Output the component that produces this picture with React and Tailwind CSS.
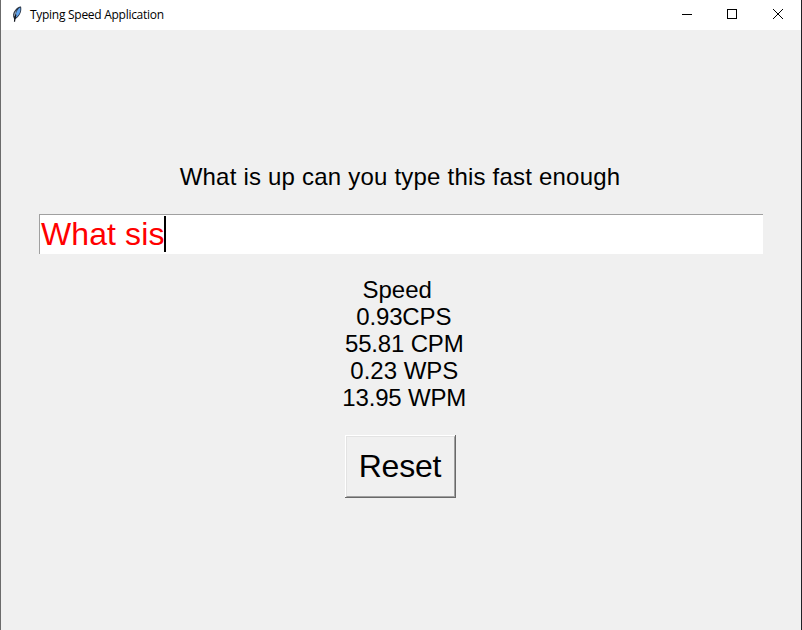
const speeds = [
  { text: "Speed ", spacing: "tracking-normal -ml-px" },
  { text: " 0.93CPS", spacing: "tracking-[-0.15px] -ml-px" },
  { text: " 55.81 CPM", spacing: "tracking-[-0.18px]" },
  { text: " 0.23 WPS", spacing: "tracking-normal" },
  { text: " 13.95 WPM", spacing: "tracking-[-0.18px]" },
];

function Feather() {
  return (
    <svg width="12" height="17" viewBox="0 0 12 17" fill="none">
      <path d="M3.2 13.2C1.3 10 1.9 6.6 4.2 4C6 1.8 7.8.4 10 .6C10.9 4 9.8 8.6 6.4 11.6L4 13.4Z" fill="#2b3442" />
      <path d="M4.9 11.4C4.4 7.4 6 3.4 9.2 1.4C10 5 8.4 8.8 4.9 11.4Z" fill="#5fa3ee" />
      <path d="M3 10.5C2.7 7.8 3.8 5.8 5.6 4L4.4 9.5Z" fill="#8a9bad" />
      <path d="M5 8.5C4.2 10.5 3.6 12.5 3.5 15.8" stroke="#10141c" strokeWidth="1.2" />
    </svg>
  );
}

function TitleBar() {
  return (
    <header className="flex h-[30px] items-center bg-white">
      <div className="ml-[10px] h-[17px] w-3 -mt-[1px]">
        <Feather />
      </div>
      <h1 className="ml-[7px] w-[136px] whitespace-nowrap text-[12px] leading-4 tracking-[-0.28px] font-['Open_Sans',sans-serif]">
        Typing Speed Application
      </h1>
      <div className="ml-auto flex h-full">
        <button aria-label="Minimize" className="h-7 w-[45px]">
          <svg width="45" height="28" fill="none" stroke="black" shapeRendering="crispEdges"><path d="M17 14.5h10" /></svg>
        </button>
        <button aria-label="Maximize" className="h-7 w-[45px]">
          <svg width="45" height="28" fill="none" stroke="black" shapeRendering="crispEdges"><path d="M17.5 9.5h9v9h-9z" /></svg>
        </button>
        <button aria-label="Close" className="h-7 w-[46px]">
          <svg width="46" height="28" fill="none" stroke="black" strokeWidth="1"><path d="M18 9l10 10M28 9L18 19" /></svg>
        </button>
      </div>
    </header>
  );
}

export default function App() {
  return (
    <div className="h-[630px] w-[802px] overflow-hidden border-l border-r border-l-[#6b6b6b] border-r-[#202126] bg-[#f0f0f0] text-black font-['Liberation_Sans',Arial,sans-serif]">
      <TitleBar />
      <main className="flex flex-col items-center pt-[133px]">
        <p className="mr-[2px] whitespace-nowrap text-[24px] leading-[27px] tracking-[0.21px]">What is up can you type this fast enough</p>
        <div className="mt-6 flex h-10 w-[724px] border-l border-t border-[#a0a0a0] bg-white pl-px pt-px text-[32px] leading-9 text-[#ff0000]">
          <span className="whitespace-nowrap tracking-[0.1px]">What sis</span>
          <span className="-ml-px h-9 w-[2px] bg-black" />
        </div>
        <div className="mt-[22px] text-center text-[24px] leading-[27px]">
          {speeds.map(({ text, spacing }) => (
            <div key={text} className={`whitespace-pre ${spacing}`}>{text}</div>
          ))}
        </div>
        <button className="mr-[2px] mt-6 flex h-[63px] w-[111px] border-b border-r border-[#696969]">
          <span className="h-full w-full border-l border-t border-white">
            <span className="flex h-full w-full justify-center border border-b-[#a0a0a0] border-l-[#e3e3e3] border-r-[#a0a0a0] border-t-[#e3e3e3] pt-[11px] text-[32px] leading-9 tracking-[-0.2px]">Reset</span>
          </span>
        </button>
      </main>
    </div>
  );
}
